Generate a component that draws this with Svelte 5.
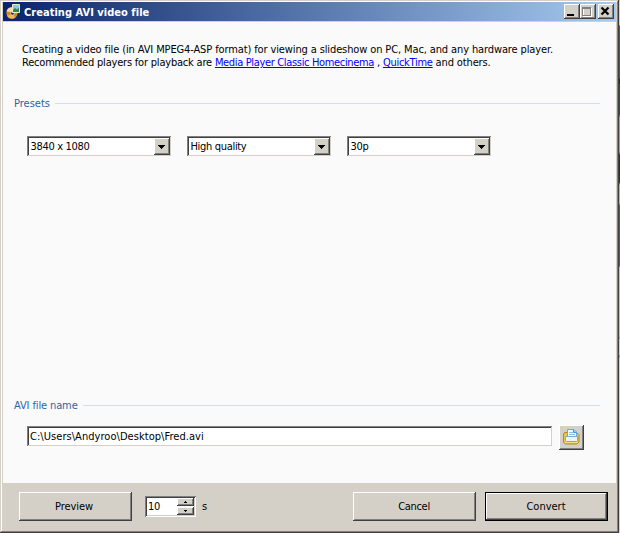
<script lang="ts">
	// "Creating AVI video file" dialog in the classic raised-bevel look.
	const selects = $state(['3840 x 1080', 'High quality', '30p']);
	let fileName = $state('C:\\Users\\Andyroo\\Desktop\\Fred.avi');
	let seconds = $state(10);
</script>

<div class="desktop">
	<div class="dialog">
		<header class="titlebar">
			<svg class="app-icon" width="16" height="17" viewBox="0 0 16 17">
				<circle cx="6" cy="10" r="5.7" fill="#d9832b" />
				<path d="M.6 8.500A5.700 5.700 0 0 1 7 4.400L6 9z" fill="#f9dca6" />
				<path d="M.8 12.500A5.700 5.700 0 0 0 9.500 14.500L7 11.500z" fill="#f3b44e" />
				<circle cx="6.5" cy="10.3" r="1.9" fill="#17367a" stroke="#f8dfae" stroke-width=".8" />
				<path d="M6.500 1.500h7v8h-7z" fill="#86c8f4" stroke="#f3ecc0" />
				<path d="M7 7l2-2 2 1.500L13 4.500V9H7z" fill="#2f8a3a" />
			</svg>
			<h1>Creating AVI video file</h1>
			<div class="controls">
				<button class="ctl" aria-label="Minimize">
					<svg width="16" height="15" viewBox="0 0 16 15"><path d="M3 10h7v2H3z" /></svg>
				</button>
				<button class="ctl" aria-label="Maximize">
					<svg width="16" height="15" viewBox="0 0 16 15" fill="none" shape-rendering="crispEdges">
						<path d="M3.500 4.500h8v8h-8z" stroke="#fff" />
						<path d="M2.500 3.500h8v8h-8zM2 4.500h9" stroke="#808080" />
					</svg>
				</button>
				<button class="ctl close" aria-label="Close">
					<svg width="16" height="15" viewBox="0 0 16 15"><path d="M3.500 3.500l7 7m0-7l-7 7" stroke="#000" stroke-width="2.2" /></svg>
				</button>
			</div>
		</header>

		<main>
			<p class="intro">
				<span class="line first">Creating a video file (in AVI MPEG4-ASP format) for viewing a slideshow on PC, Mac, and any hardware player.</span>
				<span class="line second">Recommended players for playback are <a class="mpc" href="#mpc">Media Player Classic Homecinema</a> , <a class="qt" href="#qt">QuickTime</a> <span class="tail">and others.</span></span>
			</p>

			<div class="group presets"><span>Presets</span><i></i></div>
			<div class="selects">
				{#each selects as value}
					<div class="select">
						<span>{value}</span>
						<button aria-label="Open list">
							<svg width="7" height="4" viewBox="0 0 7 4" shape-rendering="crispEdges"><path d="M0 0h7v1H0zM1 1h5v1H1zM2 2h3v1H2zM3 3h1v1H3z" /></svg>
						</button>
					</div>
				{/each}
			</div>

			<div class="group filename"><span>AVI file name</span><i></i></div>
			<div class="file-row">
				<input class="path" bind:value={fileName} aria-label="AVI file name" />
				<button class="browse" aria-label="Browse">
					<svg width="17" height="16" viewBox="0 0 17 16">
						<path d="M.5 4.500l1.500-1h3v6h7v-5h3l1 1v7.500l-2 2H2.500l-2-1.500z" fill="#e9c64b" stroke="#b58a1a" />
						<path d="M4.500.5h6.500l2.500 2.500v7h-9z" fill="#eff8ff" stroke="#6da6d8" />
						<path d="M10.500.5v3h3" fill="#7cc8fb" stroke="#3d9be0" />
						<path d="M6 3.500h4M6 5.500h6" stroke="#8cc0ea" />
						<path d="M2.500 7.500h12v4l-1 1h-10l-1-1z" fill="#eef4f6" stroke="#7fa9cc" />
						<path d="M2 13.500h13" stroke="#f6df79" />
					</svg>
				</button>
			</div>
		</main>

		<footer>
			<button class="btn preview"><span>Preview</span></button>
			<div class="spinner">
				<span>{seconds}</span>
				<div class="steps">
					<button aria-label="Increase" onclick={() => seconds++}>
						<svg width="3" height="2" viewBox="0 0 3 2" shape-rendering="crispEdges"><path d="M1 0h1v1H1zM0 1h3v1H0z" /></svg>
					</button>
					<button aria-label="Decrease" onclick={() => seconds--}>
						<svg width="3" height="2" viewBox="0 0 3 2" shape-rendering="crispEdges"><path d="M0 0h3v1H0zM1 1h1v1H1z" /></svg>
					</button>
				</div>
			</div>
			<span class="unit">s</span>
			<button class="btn cancel"><span>Cancel</span></button>
			<div class="default"><button class="btn"><span>Convert</span></button></div>
		</footer>
	</div>
	<div class="backdrop"></div>
</div>

<style>
	:global(body) {
		margin: 0;
		overflow: hidden;
	}
	.desktop {
		display: flex;
		width: 620px;
		height: 533px;
		background: #404040;
		font: 11px/13px 'DejaVu Sans Condensed', 'DejaVu Sans', sans-serif;
		font-stretch: condensed;
		color: #000;
		white-space: nowrap;
	}
	.desktop * {
		box-sizing: border-box;
	}
	button {
		padding: 0;
		border: 0;
		font: inherit;
		letter-spacing: inherit;
		color: inherit;
		background: #d4d0c8;
		display: flex;
		align-items: center;
		justify-content: center;
	}
	svg {
		display: block;
		flex: none;
	}
	.dialog {
		width: 618px;
		height: 532px;
		display: flex;
		flex-direction: column;
		padding-left: 3px;
		background: #d4d0c8;
		box-shadow:
			inset 1px 1px #d4d0c8,
			inset -1px -1px #808080,
			inset 2px 2px #fff;
	}
	.titlebar {
		display: flex;
		align-items: center;
		width: 613px;
		height: 19px;
		margin-top: 2px;
		background: linear-gradient(90deg, #0a246a, #a6caf0);
	}
	.app-icon {
		margin-left: 3px;
	}
	h1 {
		margin: 2px 0 0 2px;
		font: bold 11px/17px 'DejaVu Sans Condensed', 'DejaVu Sans', sans-serif;
		font-stretch: condensed;
		letter-spacing: 0.03px;
		color: #fff;
	}
	.controls {
		display: flex;
		margin-left: auto;
		margin-right: 2px;
	}
	.ctl {
		width: 16px;
		height: 15px;
		box-shadow:
			inset -1px -1px #404040,
			inset 1px 1px #fff,
			inset -2px -2px #808080;
	}
	.close {
		margin-left: 2px;
	}

	main {
		flex: none;
		width: 613px;
		height: 461px;
		margin-top: 1px;
		background: #fafafa;
	}
	.intro {
		margin: 0;
		padding: 21px 0 0 19px;
	}
	.line {
		display: block;
		height: 13px;
	}
	.first {
		letter-spacing: -0.12px;
	}
	.second {
		letter-spacing: -0.2px;
	}
	.mpc {
		letter-spacing: -0.34px;
	}
	.qt {
		letter-spacing: -0.27px;
	}
	.tail {
		letter-spacing: -0.13px;
	}
	a {
		color: #00f;
	}
	.group {
		display: flex;
		align-items: center;
		height: 14px;
		width: 597px;
		padding-left: 11px;
		color: #2b63ad;
	}
	.group i {
		flex: 1;
		height: 1px;
		margin-left: 5px;
		background: #d2dde8;
	}
	.presets {
		margin-top: 27px;
	}
	.selects {
		display: flex;
		gap: 16px;
		margin: 26px 0 0 24px;
	}
	.select {
		display: flex;
		width: 144px;
		height: 20px;
		padding: 2px 1px 1px 2px;
		background: #fff;
		letter-spacing: -0.32px;
		box-shadow:
			inset 1px 1px #808080,
			inset -1px -1px #d4d0c8,
			inset 2px 2px #404040;
	}
	.select span {
		flex: 1;
		padding-left: 1.5px;
		line-height: 18px;
	}
	.select button {
		width: 16px;
		height: 17px;
		padding-right: 1px;
		box-shadow:
			inset -1px -1px #404040,
			inset 1px 1px #fff,
			inset -2px -2px #808080;
	}
	.filename {
		margin-top: 242px;
		letter-spacing: -0.12px;
	}
	.file-row {
		display: flex;
		margin: 13px 0 0 24px;
	}
	.path {
		width: 525px;
		height: 20px;
		margin: 1px 7px 0 0;
		padding: 1px 2px 0 3px;
		border: 0;
		font: inherit;
		letter-spacing: 0.05px;
		background: #fff;
		box-shadow:
			inset 1px 1px #808080,
			inset -1px -1px #d4d0c8,
			inset 2px 2px #404040;
	}
	.browse {
		width: 25px;
		height: 25px;
		padding-bottom: 2px;
		box-shadow:
			inset -1px -1px #404040,
			inset 1px 1px #fff,
			inset -2px -2px #808080;
	}
	footer {
		display: flex;
		align-items: flex-start;
		padding: 9px 0 0 16px;
	}
	.btn {
		width: 113px;
		height: 29px;
		box-shadow:
			inset -1px -1px #404040,
			inset 1px 1px #fff,
			inset -2px -2px #808080;
	}
	.preview {
		padding-right: 3px;
		letter-spacing: -0.1px;
	}
	.spinner {
		display: flex;
		width: 51px;
		height: 21px;
		margin: 4px 0 0 13px;
		padding: 2px;
		background: #fff;
		box-shadow:
			inset 1px 1px #808080,
			inset -1px -1px #fff,
			inset 2px 2px #404040,
			inset -2px -2px #d4d0c8;
	}
	.spinner span {
		flex: 1;
		padding-left: 1px;
		line-height: 17px;
		letter-spacing: -0.3px;
	}
	.steps {
		width: 17px;
	}
	.steps button {
		width: 17px;
		height: 8px;
		margin-bottom: 1px;
		box-shadow:
			inset -1px -1px #404040,
			inset 1px 1px #fff,
			inset -2px -2px #808080;
	}
	.unit {
		margin: 8px 0 0 6px;
	}
	.cancel {
		width: 123px;
		margin-left: auto;
		padding-right: 1px;
		letter-spacing: -0.3px;
	}
	.default {
		width: 123px;
		height: 29px;
		margin: 0 10px 0 9px;
		padding: 1px;
		background: #000;
	}
	.default .btn {
		width: 121px;
		height: 27px;
		padding-right: 1px;
	}
	/* Sliver of the window behind the dialog. */
	.backdrop {
		width: 1px;
		height: 533px;
		margin-left: 1px;
		background: linear-gradient(
			#d4d0c8 25px,
			#3a5a94 26px 78px,
			#3a1a1c 79px 83px,
			#7a2e18 84px 114px,
			#e08a50 118px 152px,
			#4a2020 155px 182px,
			#eda060 185px 203px,
			#a04510 206px 234px,
			#5a5578 237px 266px,
			#c4c1ba 267px 337px,
			#777 338px,
			#d4d0c8 339px 355px,
			#777 356px,
			#d4d0c8 358px
		);
	}
</style>
